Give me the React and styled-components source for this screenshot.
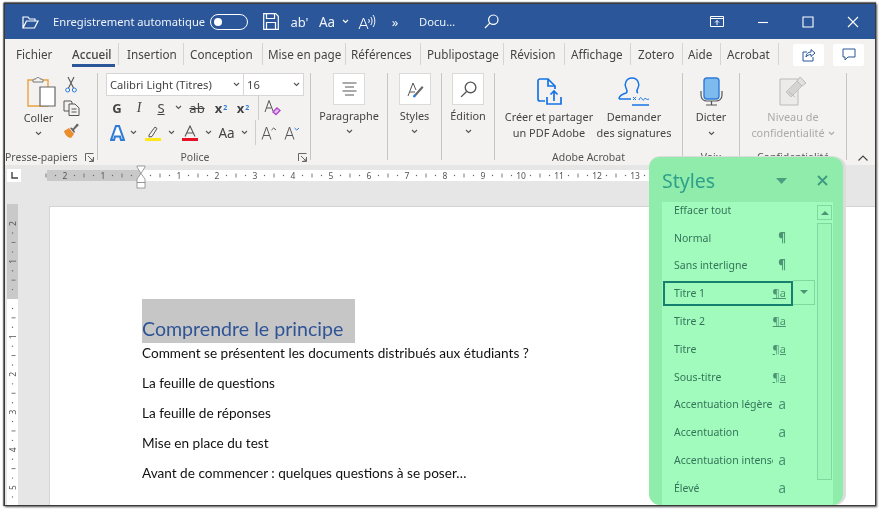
import React from "react";
import styled, { createGlobalStyle } from "styled-components";

const Global = createGlobalStyle`
  html, body { margin: 0; padding: 0; background: #fff; overflow: hidden; }
  #root { width: 879px; height: 509px; }
  * { box-sizing: border-box; }
`;
const UI = `"Noto Sans", "Open Sans", sans-serif`;
const DOC = `Lato, "Open Sans", sans-serif`;

const Stage = styled.div`
  width: 879px; height: 509px; padding: 3px 3px 3px 4px; background: #fff;
  font-family: ${UI}; filter: blur(0.4px);
`;
const Win = styled.div`
  position: relative; width: 872px; height: 503px; border: 1px solid #3a3a3a;
  box-shadow: 1px 1px 2px #555, -1px 0 1px #777, 0 -1px 1px #777;
  display: flex; flex-direction: column; overflow: hidden; background: #e6e6e6;
`;
const TitleBar = styled.div`
  height: 35px; background: #2b579a; color: #fff; display: flex; align-items: center; flex: none;
`;
const TitleSlot = styled.div`
  width: ${p => p.$w}px; margin-left: ${p => p.$ml || 0}px; flex: none;
  display: flex; align-items: center; justify-content: ${p => p.$left ? "flex-start" : "center"};
  font-size: ${p => p.$fs || 11.2}px; white-space: nowrap; color: #eef2f8; height: 100%;
`;
const Toggle = styled.div`
  width: 38px; height: 16px; border: 1.5px solid #fff; border-radius: 8px; display: flex; align-items: center; padding-left: 3px;
  &::before { content: ""; width: 8px; height: 8px; border-radius: 50%; background: #fff; }
`;
const TabBar = styled.div`
  height: 31px; background: #f3f2f1; display: flex; align-items: center; flex: none;
`;
const Tab = styled.div`
  position: relative; width: ${p => p.$w}px; flex: none; height: 22px; margin-top: -1px;
  display: flex; align-items: center; padding-left: ${p => p.$pl || 0}px; overflow: hidden; white-space: nowrap;
  font-size: 11.7px; color: #444; font-weight: ${p => p.$active ? 500 : 400};
  border-right: ${p => p.$sep ? "1px solid #d6d4d2" : "none"};
`;
const Underline = styled.div`
  position: absolute; left: 67px; top: 60px; width: 43px; height: 2.5px; background: #2b579a;
`;
const SquareBtn = styled.div`
  width: 31px; height: 22px; background: #fff; border-radius: 2px; flex: none; margin-left: ${p => p.$ml}px;
  display: flex; align-items: center; justify-content: center;
`;
const Ribbon = styled.div`
  height: 95px; background: #f3f2f1; display: flex; flex: none; align-items: flex-start; padding-top: 3px;
`;
const Group = styled.div`
  width: ${p => p.$w}px; height: 87px; flex: none; display: flex; flex-direction: column;
  border-right: 1px solid #c8c6c4;
`;
const GroupBody = styled.div`
  height: 78px; flex: none; display: flex; justify-content: ${p => p.$j || "flex-start"};
  padding-left: ${p => p.$pl || 0}px;
`;
const GroupLabel = styled.div`
  height: 13px; flex: none; font-size: 10.5px; line-height: 13px; color: #555; position: relative;
  text-align: ${p => p.$left ? "left" : "center"}; white-space: nowrap; padding-right: ${p => p.$pr || 0}px;
  & > svg { position: absolute; right: 3px; top: 2px; }
`;
const BigCol = styled.div`
  width: ${p => p.$w}px; flex: none; display: flex; flex-direction: column; align-items: center; margin-left: ${p => p.$ml || 0}px;
`;
const IconBox = styled.div`
  height: ${p => p.$h || 36}px; display: flex; align-items: center; justify-content: center; flex: none;
  padding-left: ${p => p.$pl || 0}px;
`;
const Framed = styled.div`
  width: 32px; height: 32px; background: #fff; border: 1px solid #dcdad8; display: flex; align-items: center; justify-content: center; flex: none;
`;
const BtnText = styled.div`
  font-size: 10.9px; line-height: 16px; color: ${p => p.$dim ? "#aaa" : "#444"}; text-align: center; white-space: nowrap;
  margin-top: ${p => p.$mt || 0}px;
  & > svg { margin-left: 3px; vertical-align: 1px; }
`;
const Chevron = styled.div`
  height: ${p => p.$h || 14}px; display: flex; align-items: center; justify-content: center; flex: none;
`;
const SideCol = styled.div`
  width: 22px; margin-left: 3px; display: flex; flex-direction: column; align-items: center; gap: 7px; padding-top: 3px; flex: none;
`;
const PoliceBody = styled.div`
  padding-left: 8px; display: flex; flex-direction: column; height: 74px;
`;
const ComboRow = styled.div`
  display: flex; height: 23px; flex: none; width: 198px; background: #fff; border: 1px solid #d8d6d4;
`;
const Combo = styled.div`
  width: ${p => p.$w}px; flex: none; display: flex; align-items: center; justify-content: space-between; padding: 0 3px;
  font-size: 11.2px; color: #444; border-right: ${p => p.$sep ? "1px solid #d8d6d4" : "none"}; white-space: nowrap;
`;
const ToolRow = styled.div`
  display: flex; align-items: center; height: 25px; flex: none; margin-top: ${p => p.$mt || 0}px;
`;
const Cell = styled.div`
  width: ${p => p.$w}px; flex: none; display: flex; align-items: center; justify-content: center; height: 100%;
  font-size: ${p => p.$fs || 13}px; color: ${p => p.$c || "#444"}; font-weight: ${p => p.$b ? 700 : 400};
  font-style: ${p => p.$i ? "italic" : "normal"}; font-family: ${p => p.$serif ? `"Liberation Serif", serif` : "inherit"};
  text-decoration: ${p => p.$d || "none"};
  border-right: ${p => p.$sep ? "1px solid #d0cecc" : "none"};
`;
const Sub = styled.span`
  font-size: 7px; color: #2e7cd6; vertical-align: ${p => p.$up ? "6px" : "-3px"}; margin-left: 1px;
`;
const Workspace = styled.div`
  flex: 1; display: flex; flex-direction: column; background: #e6e6e6; min-height: 0;
`;
const RulerRow = styled.div`
  height: 41px; flex: none; display: flex; padding-top: 5px; align-items: flex-start;
`;
const TabStop = styled.div`
  width: 14px; height: 13px; margin-top: -1px; background: #fff; margin-left: 2px; display: flex; align-items: center; justify-content: center; flex: none;
`;
const CanvasRow = styled.div`
  flex: 1; display: flex; min-height: 0;
`;
const Page = styled.div`
  margin-left: 31px; flex: 1; background: #fff; border: 1px solid #d4d4d4; border-bottom: none; border-right: none;
  padding: 92px 0 0 92px; font-family: ${DOC}; color: #1a1a1a;
`;
const Selected = styled.div`
  width: 213px; height: 44px; background: #c6c6c6; display: flex; align-items: flex-end; padding-bottom: 2px;
  font-size: 19.6px; line-height: 24px; color: #2f5496; white-space: nowrap;
`;
const Para = styled.div`
  font-size: 13.6px; height: 30px; line-height: 20px; white-space: nowrap; color: #111;
`;
const Panel = styled.div`
  position: absolute; left: 644px; top: 153px; width: 194px; bottom: 0; background: #90ecaa;
  border-radius: 11px 11px 11px 11px; box-shadow: 3px 0 0 #dcdcdc, 0 -1px 0 #dcdcdc;
  display: flex; flex-direction: column; z-index: 2; overflow: hidden;
`;
const PanelHead = styled.div`
  height: 45px; flex: none; display: flex; align-items: center; padding: 2px 15px 0 13px;
`;
const PanelTitle = styled.div`
  font-size: 19.5px; color: #2fa08c; flex: 1;
`;
const PanelList = styled.div`
  flex: 1; margin: 0 10px 0 13px; background: #a0fbbc; display: flex; min-height: 0;
`;
const Rows = styled.div`
  width: 154px; flex: none; display: flex; flex-direction: column; margin-top: -6px;
`;
const Row = styled.div`
  position: relative; height: 27.8px; flex: none; display: flex; align-items: center; justify-content: space-between;
  width: ${p => p.$sel ? "130px" : "123px"}; margin-left: 1px;
  padding: 0 ${p => p.$sel ? "7px" : "0"} 0 11px; font-size: 10.5px; color: #35745a;
  ${p => p.$sel ? "outline: 2.5px solid #16806f; outline-offset: -2.5px; height: 25px; margin: 1.4px 0 1.4px 1px;" : ""}
`;
const RowName = styled.span`
  white-space: nowrap; overflow: hidden; width: ${p => p.$sym === "a" ? "99px" : "auto"}; flex: none;
`;
const RowSym = styled.span`
  font-size: ${p => p.$sym === "a" ? 14 : p.$sym === "¶" ? 12 : 11}px; line-height: 14px; color: #4d9474; flex: none;
  text-decoration: ${p => p.$sym === "¶a" ? "underline" : "none"}; font-weight: ${p => p.$sym === "¶" ? 700 : 400};
`;
const RowDrop = styled.div`
  position: absolute; left: 130px; top: -1px; width: 22px; height: 25px; border: 1px solid #7fd8a0; border-left: none;
  display: flex; align-items: center; justify-content: center;
  &::before { content: ""; border-left: 4.5px solid transparent; border-right: 4.5px solid transparent; border-top: 4px solid #4d9474; }
`;
const Scroll = styled.div`
  width: 15px; margin-left: 1px; display: flex; flex-direction: column; gap: 3px; padding-top: 3px; flex: none;
`;
const ScrollUp = styled.div`
  height: 15px; border: 1px solid #7fd8a0; display: flex; align-items: center; justify-content: center; flex: none;
  &::before { content: ""; border-left: 4px solid transparent; border-right: 4px solid transparent; border-bottom: 4px solid #4d9474; }
`;
const Thumb = styled.div`
  height: 257px; border: 1px solid #7fd8a0; background: #9df7b9; flex: none;
`;
const CollapseArrow = styled.div`
  display: flex; margin-left: 11px; align-self: flex-end; flex: none; margin-bottom: 4px;
`;

const Chev = ({ c = "#555", w = 7 }) => (
  <svg width={w} height="5" viewBox="0 0 7 5" fill="none"><path d="M1 1l2.5 2.5L6 1" stroke={c} strokeWidth="1.1" /></svg>
);
const Launcher = () => (
  <svg width="9" height="9" viewBox="0 0 9 9" fill="none" stroke="#666"><path d="M.5 8V.5h8M8.5 4v4.5H4M3 3l5 5M5.5 8h2.5V5.5" /></svg>
);
const Folder = () => (
  <svg width="17" height="14" viewBox="0 0 17 14" fill="none" stroke="#fff" strokeWidth="1.2"><path d="M1 13V2h5l1.5 2H13v2M1 13h11.5L16 6H4.5L1 13z" /></svg>
);
const Save = () => (
  <svg width="16" height="17" viewBox="0 0 16 17" fill="none" stroke="#fff" strokeWidth="1.2"><path d="M.7.7h12l2.6 2.6v13H.7z" /><path d="M3.5 1v4.5h8V1M3.5 16v-6.5h9V16" /></svg>
);
const Speak = () => (
  <svg width="18" height="17" viewBox="0 0 18 17" fill="none" stroke="#fff" strokeWidth="1"><path d="M1 16L5.5 5 10 16M2.6 12.5h5.8" /><path d="M10.5 6c1 1 1 3 0 4M12.8 4c1.7 2 1.7 6 0 8M15 2c2.4 3 2.4 9 0 12" /></svg>
);
const Search = ({ c = "#fff", s = 15 }) => (
  <svg width={s} height={s} viewBox="0 0 15 15" fill="none" stroke={c} strokeWidth="1.2"><circle cx="9.3" cy="5.7" r="4.7" /><path d="M5.8 9.2L1 14" /></svg>
);
const RibbonDisplay = () => (
  <svg width="14" height="11" viewBox="0 0 14 11" fill="none" stroke="#fff"><path d="M.5.5h13v10H.5z" /><path d="M.5 2.5h13" /><path d="M7 9V4.5M5 6.5l2-2 2 2" /></svg>
);
const WinCtl = ({ d }) => (
  <svg width="12" height="12" viewBox="0 0 12 12" fill="none" stroke="#fff" strokeWidth="1.1"><path d={d} /></svg>
);
const Share = () => (
  <svg width="14" height="14" viewBox="0 0 14 14" fill="none" stroke="#2b579a" strokeWidth="1"><path d="M5 4H1v9h10V9" /><path d="M4 9c0-3 2-5 5-5V1.5L13 5 9 8.5V6.5C7 6.5 5 7.5 4 9z" /></svg>
);
const Comment = () => (
  <svg width="14" height="13" viewBox="0 0 14 13" fill="none" stroke="#2b579a" strokeWidth="1"><path d="M1 1h12v8H6l-3 3V9H1z" /></svg>
);
const Paste = () => (
  <svg width="29" height="31" viewBox="0 0 29 31" fill="none">
    <path d="M1 4h20v26H1z" stroke="#e8a33d" strokeWidth="1.4" />
    <path d="M6 4c0-1 2-1 3-1 0-2 4-2 4 0 1 0 3 0 3 1v2H6z" fill="#f3f2f1" stroke="#777" />
    <path d="M13 11h15v19H13z" fill="#fff" stroke="#666" strokeWidth="1.2" />
  </svg>
);
const Scissors = () => (
  <svg width="12" height="17" viewBox="0 0 12 17" fill="none"><path d="M3 1l5.5 11M9 1L3.5 12" stroke="#555" strokeWidth="1.1" /><circle cx="2.7" cy="14" r="2" stroke="#2e7cd6" /><circle cx="9.3" cy="14" r="2" stroke="#2e7cd6" /></svg>
);
const Copy = () => (
  <svg width="17" height="16" viewBox="0 0 17 16" fill="none" stroke="#555"><path d="M7 11H1V1h7l1 1v2" /><path d="M6 4h6l4 4v7.5H6z" fill="#f3f2f1" /><path d="M8.5 9h5M8.5 12h5" /></svg>
);
const Brush = () => (
  <svg width="17" height="15" viewBox="0 0 17 15"><path d="M1 8l5-3 5 6-3 4c-3 0-6-3-7-7z" fill="#eb8c2d" /><path d="M7 5l4 5 1-1-1-2 5-5-2-1.5-4 5-2-1z" fill="#666" /></svg>
);
const Eraser = () => (
  <svg width="17" height="17" viewBox="0 0 17 17" fill="none"><path d="M1 13L5 1.5 9 12M2.5 9h5" stroke="#555" /><path d="M9 13l4-4 3 2.5-4 4z" stroke="#b148c9" strokeWidth="1.4" fill="#e5c4ee" /></svg>
);
const BlueA = () => (
  <svg width="15" height="16" viewBox="0 0 15 16"><path d="M1 15L6 1h3l5 14h-3l-1-3.5H5L4 15z" fill="#fff" stroke="#2e7cd6" strokeWidth="2.1" /></svg>
);
const Highlighter = () => (
  <svg width="16" height="16" viewBox="0 0 16 16" fill="none"><path d="M4 10l6-8 2 1.5-5 8-3 .5z" stroke="#555" /><path d="M0 13h16v3H0z" fill="#ffe81a" /></svg>
);
const RedA = () => (
  <svg width="16" height="16" viewBox="0 0 16 16" fill="none"><path d="M3 11.5L8 1l5 10.5M5 8h6" stroke="#555" strokeWidth="1.1" /><path d="M0 13h16v3H0z" fill="#e81123" /></svg>
);
const GrowA = ({ down }) => (
  <svg width="16" height="14" viewBox="0 0 16 14" fill="none"><path d="M1 13.5L5.5 1 10 13.5M2.5 9.5h6" stroke="#555" /><path d={down ? "M10.5 2l2.2 2L15 2" : "M10.5 4l2.2-2L15 4"} stroke={down ? "#2e7cd6" : "#555"} /></svg>
);
const AlignC = () => (
  <svg width="15" height="14" viewBox="0 0 15 14" fill="none" stroke="#555"><path d="M.5 1h14M3 5h9M.5 9h14M3 13h9" /></svg>
);
const StylesIcon = () => (
  <svg width="18" height="17" viewBox="0 0 18 17" fill="none"><path d="M2 15L7 2l3 7" stroke="#555" /><path d="M4 11h5" stroke="#555" /><path d="M8 14L16 5l1.5 1.5L10 15z" fill="#666" /><path d="M7 16c0-2 1-3 3-2 0 2-1 3-3 2z" fill="#2e7cd6" /></svg>
);
const PdfIcon = () => (
  <svg width="25" height="27" viewBox="0 0 25 27" fill="none" stroke="#1473e6" strokeWidth="1.7"><path d="M8 23H3a2 2 0 0 1-2-2V3a2 2 0 0 1 2-2h8l7 7v3" /><path d="M11 1v7h7" /><path d="M10 19v7h14v-7" /><path d="M17 23V13M13.5 16.5L17 13l3.5 3.5" /></svg>
);
const SignIcon = () => (
  <svg width="32" height="29" viewBox="0 0 32 29" fill="none" stroke="#1473e6" strokeWidth="1.5"><path d="M1 22c0-4 4-5 7-6 2-1 1-3 0-5-2-4 0-10 6-10s8 6 6 10c-1 2-2 4 0 5" /><path d="M1 22h12" /><path d="M15 20l3 3M18 20l-3 3M21 23c1-3 2-3 3-1s2 1 3-1c1 1 2 2 4 1" strokeWidth="1" /><path d="M14 28h17" /></svg>
);
const MicIcon = () => (
  <svg width="23" height="29" viewBox="0 0 23 29" fill="none"><rect x="4" y="1" width="15" height="21" rx="3" fill="#7dbbef" stroke="#2e7cd6" strokeWidth="1.4" /><path d="M1 14v4c0 4 3 6 6 6h9c3 0 6-2 6-6v-4" stroke="#555" strokeWidth="1.2" /><path d="M11.5 24v4M6 28h11" stroke="#555" strokeWidth="1.2" /></svg>
);
const ConfIcon = () => (
  <svg width="28" height="30" viewBox="0 0 28 30" fill="none" stroke="#bdbbb9"><path d="M1 3h18v26H1z" fill="#ecebea" /><path d="M7 16l11-11 5 5-11 11z" fill="#d6d4d2" stroke="#c4c2c0" /><path d="M18 5l3-4 6 6-4 3z" fill="#e2e0de" /><path d="M10 16l6 5" /></svg>
);
const DropTri = () => (
  <svg width="11" height="6" viewBox="0 0 11 6"><path d="M0 0h11L5.5 6z" fill="#4d9e80" /></svg>
);
const CloseX = () => (
  <svg width="11" height="11" viewBox="0 0 11 11" fill="none" stroke="#3f9a80" strokeWidth="1.8"><path d="M1 1l9 9M10 1l-9 9" /></svg>
);

const HRuler = () => {
  const U = 38, O = 94, marks = [];
  for (let i = -10; i <= 54; i++) {
    const x = O + i * U / 4;
    if (i === 0) continue;
    if (i % 4 === 0) marks.push(<text key={i} x={x} y="9" fontSize="8.5" textAnchor="middle" fill="#555" fontFamily="Noto Sans">{Math.abs(i / 4)}</text>);
    else if (i % 2 === 0) marks.push(<path key={i} d={`M${x} 3.5v4`} stroke="#777" />);
    else marks.push(<circle key={i} cx={x} cy="5.5" r=".7" fill="#666" />);
  }
  return (
    <svg width="610" height="18" viewBox="0 0 610 18" style={{ marginLeft: 26, overflow: "visible", flex: "none" }}>
      <rect x="0" y="0" width="94" height="11" fill="#c9c9c9" />
      <rect x="94" y="0" width="516" height="11" fill="#fff" />
      {marks}
      <path d="M90 -4h8v1l-4 6.5 4 5.5v3.5h-8V9l4-5.5-4-6.5z" fill="#fff" stroke="#888" strokeWidth=".8" />
      <rect x="90" y="12.5" width="8" height="5.5" fill="#fff" stroke="#888" strokeWidth=".8" />
    </svg>
  );
};
const VRuler = () => {
  const U = 37.7, O = 95, marks = [];
  for (let i = -8; i <= 22; i++) {
    const y = O + i * U / 4;
    if (i === 0) continue;
    if (i % 4 === 0) marks.push(<text key={i} x="0" y="0" fontSize="8.5" textAnchor="middle" fill="#555" fontFamily="Noto Sans" transform={`translate(8.5 ${y}) rotate(-90)`}>{Math.abs(i / 4)}</text>);
    else if (i % 2 === 0) marks.push(<path key={i} d={`M3.5 ${y}h4`} stroke="#777" transform="translate(1 0)" />);
    else marks.push(<circle key={i} cx="5.5" cy={y} r=".7" fill="#666" />);
  }
  return (
    <svg width="11" height="302" viewBox="0 0 11 302" style={{ marginLeft: 2, marginTop: -2, flex: "none" }}>
      <rect x="0" y="0" width="11" height="95" fill="#c9c9c9" />
      <rect x="0" y="95" width="11" height="207" fill="#fff" />
      {marks}
    </svg>
  );
};

const tabs = [
  ["Fichier", 56, 11, false], ["Accueil", 58, 11, true], ["Insertion", 65, 8, true], ["Conception", 79, 6, true],
  ["Mise en page", 83, 5, true], ["Références", 75, 5, true], ["Publipostage", 83, 6, true], ["Révision", 61, 6, true],
  ["Affichage", 66, 6, true], ["Zotero", 52, 7, true], ["Aide", 38, 5, true], ["Acrobat", 58, 6, true],
];
const styles = [
  ["Effacer tout", ""], ["Normal", "¶"], ["Sans interligne", "¶"], ["Titre 1", "¶a", true], ["Titre 2", "¶a"],
  ["Titre", "¶a"], ["Sous-titre", "¶a"], ["Accentuation légère", "a"], ["Accentuation", "a"],
  ["Accentuation intense", "a"], ["Élevé", "a"],
];
const paras = [
  "Comment se présentent les documents distribués aux étudiants ?",
  "La feuille de questions", "La feuille de réponses", "Mise en place du test",
  "Avant de commencer : quelques questions à se poser…",
];

export default function App() {
  return (
    <Stage>
      <Global />
      <Win>
        <TitleBar>
          <TitleSlot $ml={17} $w={17}><Folder /></TitleSlot>
          <TitleSlot $ml={14} $w={157} $left>Enregistrement automatique</TitleSlot>
          <TitleSlot $w={38}><Toggle /></TitleSlot>
          <TitleSlot $ml={15} $w={16}><Save /></TitleSlot>
          <TitleSlot $ml={13} $w={15} $fs={13}>ab'</TitleSlot>
          <TitleSlot $ml={11} $w={18} $fs={13.5}>Aa</TitleSlot>
          <TitleSlot $ml={5} $w={8}><Chev c="#fff" /></TitleSlot>
          <TitleSlot $ml={9} $w={18}><Speak /></TitleSlot>
          <TitleSlot $ml={14} $w={10} $fs={13}>»</TitleSlot>
          <TitleSlot $ml={19} $w={38} $left $fs={11.2}>Docu…</TitleSlot>
          <TitleSlot $ml={27} $w={15}><Search /></TitleSlot>
          <TitleSlot $ml={211} $w={14}><RibbonDisplay /></TitleSlot>
          <TitleSlot $ml={33} $w={12}><WinCtl d="M1 6.5h10" /></TitleSlot>
          <TitleSlot $ml={33} $w={12}><WinCtl d="M1 1h10v10H1z" /></TitleSlot>
          <TitleSlot $ml={33} $w={12}><WinCtl d="M1 1l10 10M11 1L1 11" /></TitleSlot>
        </TitleBar>
        <TabBar>
          {tabs.map(([t, w, pl, sep]) => <Tab key={t} $w={w} $pl={pl} $sep={sep} $active={t === "Accueil"}>{t}</Tab>)}
          <SquareBtn $ml={14}><Share /></SquareBtn>
          <SquareBtn $ml={9}><Comment /></SquareBtn>
        </TabBar>
        <Underline />
        <Ribbon>
          <Group $w={93}>
            <GroupBody $pl={15}>
              <BigCol $w={37}>
                <IconBox $h={36} $pl={5}><Paste /></IconBox>
                <BtnText $mt={1}>Coller</BtnText>
                <Chevron><Chev /></Chevron>
              </BigCol>
              <SideCol>
                <Scissors /><Copy /><Brush />
              </SideCol>
            </GroupBody>
            <GroupLabel $left>Presse-papiers<Launcher /></GroupLabel>
          </Group>
          <Group $w={213}>
            <GroupBody>
              <PoliceBody>
                <ComboRow>
                  <Combo $w={137} $sep>Calibri Light (Titres)<Chev /></Combo>
                  <Combo $w={59}>16<Chev /></Combo>
                </ComboRow>
                <ToolRow $mt={-1}>
                  <Cell $w={22} $b>G</Cell>
                  <Cell $w={22} $i $serif $fs={14}>I</Cell>
                  <Cell $w={22} $d="underline">S</Cell>
                  <Cell $w={12}><Chev /></Cell>
                  <Cell $w={26} $d="line-through">ab</Cell>
                  <Cell $w={22} $b>x<Sub>2</Sub></Cell>
                  <Cell $w={22} $b>x<Sub $up>2</Sub></Cell>
                  <Cell $w={5} $sep />
                  <Cell $w={27}><Eraser /></Cell>
                </ToolRow>
                <ToolRow>
                  <Cell $w={22}><BlueA /></Cell>
                  <Cell $w={10}><Chev /></Cell>
                  <Cell $w={29}><Highlighter /></Cell>
                  <Cell $w={9}><Chev /></Cell>
                  <Cell $w={27}><RedA /></Cell>
                  <Cell $w={10}><Chev /></Cell>
                  <Cell $w={27} $fs={13.5}>Aa</Cell>
                  <Cell $w={9}><Chev /></Cell>
                  <Cell $w={7} $sep />
                  <Cell $w={25}><GrowA /></Cell>
                  <Cell $w={21}><GrowA down /></Cell>
                </ToolRow>
              </PoliceBody>
            </GroupBody>
            <GroupLabel $pr={18}>Police<Launcher /></GroupLabel>
          </Group>
          <Group $w={77}>
            <GroupBody $j="center">
              <BigCol $w={70}>
                <Framed><AlignC /></Framed>
                <BtnText $mt={3}>Paragraphe</BtnText>
                <Chevron><Chev /></Chevron>
              </BigCol>
            </GroupBody>
            <GroupLabel />
          </Group>
          <Group $w={54}>
            <GroupBody $j="center">
              <BigCol $w={44}>
                <Framed><StylesIcon /></Framed>
                <BtnText $mt={3}>Styles</BtnText>
                <Chevron><Chev /></Chevron>
              </BigCol>
            </GroupBody>
            <GroupLabel />
          </Group>
          <Group $w={53}>
            <GroupBody $j="center">
              <BigCol $w={44}>
                <Framed><Search c="#555" s={17} /></Framed>
                <BtnText $mt={3}>Édition</BtnText>
                <Chevron><Chev /></Chevron>
              </BigCol>
            </GroupBody>
            <GroupLabel />
          </Group>
          <Group $w={188}>
            <GroupBody $pl={4}>
              <BigCol $w={100}>
                <IconBox $h={36}><PdfIcon /></IconBox>
                <BtnText>Créer et partager<br />un PDF Adobe</BtnText>
              </BigCol>
              <BigCol $w={76} $ml={-3}>
                <IconBox $h={36}><SignIcon /></IconBox>
                <BtnText>Demander<br />des signatures</BtnText>
              </BigCol>
            </GroupBody>
            <GroupLabel>Adobe Acrobat</GroupLabel>
          </Group>
          <Group $w={57}>
            <GroupBody $j="center">
              <BigCol $w={50}>
                <IconBox $h={36}><MicIcon /></IconBox>
                <BtnText>Dicter</BtnText>
                <Chevron $h={16}><Chev /></Chevron>
              </BigCol>
            </GroupBody>
            <GroupLabel>Voix</GroupLabel>
          </Group>
          <Group $w={107}>
            <GroupBody $j="center">
              <BigCol $w={100}>
                <IconBox $h={36}><ConfIcon /></IconBox>
                <BtnText $dim>Niveau de<br />confidentialité<Chev c="#aaa" /></BtnText>
              </BigCol>
            </GroupBody>
            <GroupLabel>Confidentialité</GroupLabel>
          </Group>
          <CollapseArrow><svg width="10" height="6" viewBox="0 0 10 6" fill="none" stroke="#444" strokeWidth="1.1"><path d="M.5 5.5L5 1l4.5 4.5" /></svg></CollapseArrow>
        </Ribbon>
        <Workspace>
          <RulerRow>
            <TabStop><svg width="7" height="7" viewBox="0 0 7 7" fill="none" stroke="#444" strokeWidth="1.4"><path d="M1 0v6h6" /></svg></TabStop>
            <HRuler />
          </RulerRow>
          <CanvasRow>
            <VRuler />
            <Page>
              <Selected>Comprendre le principe</Selected>
              {paras.map(t => <Para key={t}>{t}</Para>)}
            </Page>
          </CanvasRow>
        </Workspace>
        <Panel>
          <PanelHead>
            <PanelTitle>Styles</PanelTitle>
            <DropTri />
            <span style={{ width: 30 }} />
            <CloseX />
          </PanelHead>
          <PanelList>
            <Rows>
              {styles.map(([n, s, sel]) => (
                <Row key={n} $sel={sel}>
                  <RowName $sym={s}>{n}</RowName>
                  {s && <RowSym $sym={s}>{s}</RowSym>}
                  {sel && <RowDrop />}
                </Row>
              ))}
            </Rows>
            <Scroll>
              <ScrollUp />
              <Thumb />
            </Scroll>
          </PanelList>
        </Panel>
      </Win>
    </Stage>
  );
}
